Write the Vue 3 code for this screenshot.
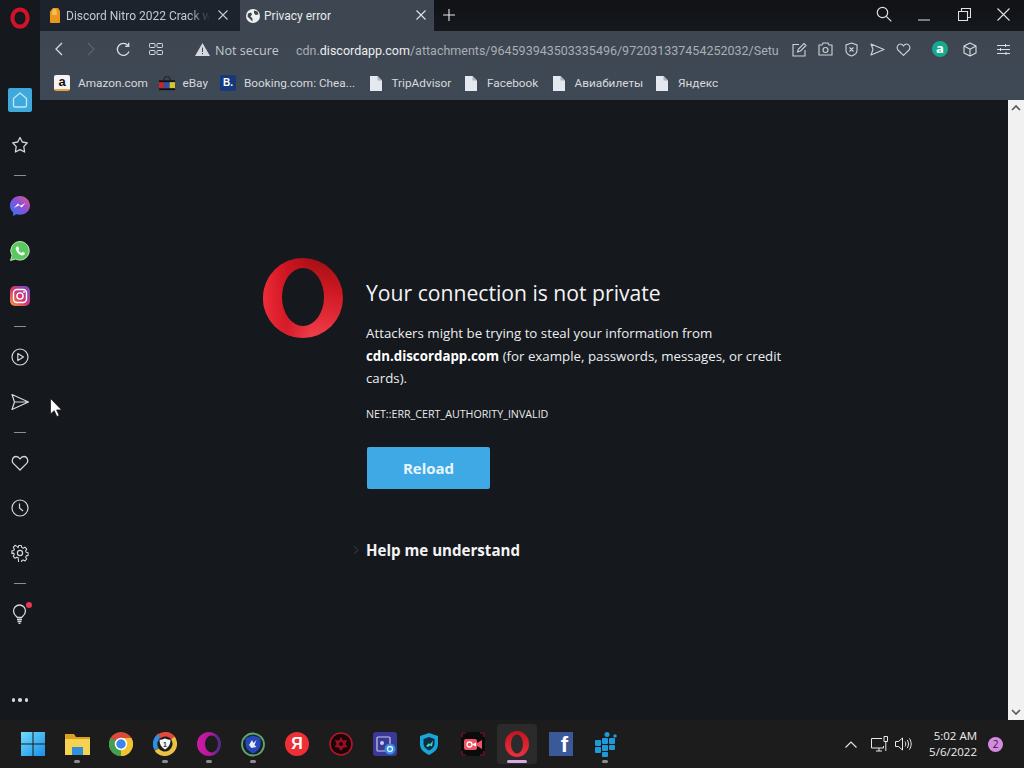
<script setup>
const bookmarks = [
  { label: 'Amazon.com', kind: 'amazon', width: 68 },
  { label: 'eBay', kind: 'ebay', width: 25 },
  { label: 'Booking.com: Chea...', kind: 'booking', width: 111 },
  { label: 'TripAdvisor', kind: 'file', width: 59 },
  { label: 'Facebook', kind: 'file', width: 51 },
  { label: 'Авиабилеты', kind: 'file', width: 67 },
  { label: 'Яндекс', kind: 'file', width: 38 }
]
</script>

<template>
  <div class="screen">
    <div class="browser">
      <aside class="sidebar">
        <div class="side-logo">
          <svg width="20" height="22" viewBox="0 0 20 22"><ellipse cx="10" cy="11" rx="7.6" ry="8.6" fill="none" stroke="#d3122a" stroke-width="4"/></svg>
        </div>
        <div class="slot">
          <div class="home-box">
            <svg width="18" height="18" viewBox="0 0 18 18" fill="none" stroke="#bfe9fb" stroke-width="1.3"><path d="M2.5 7.5 9 2l6.500 5.500v7a1.500 1.500 0 0 1-1.500 1.500H4a1.500 1.500 0 0 1-1.500-1.500z"/></svg>
          </div>
        </div>
        <div class="slot">
          <svg width="18" height="18" viewBox="0 0 18 18" fill="none" stroke="#d5d8dc" stroke-width="1.300" stroke-linejoin="round"><path d="M9 1.500 11.300 6l5 .8-3.500 3.800.8 5.400L9 13.700 4.400 16l.8-5.400L1.700 6.800l5-.8z"/></svg>
        </div>
        <div class="sep"></div>
        <div class="slot">
          <svg width="20" height="20" viewBox="0 0 20 20"><defs><linearGradient id="msg" x1="0" y1="1" x2="1" y2="0"><stop offset="0" stop-color="#2f7cf0"/><stop offset=".55" stop-color="#8b4fd8"/><stop offset="1" stop-color="#ec5a80"/></linearGradient></defs><path d="M10 0C4.400 0 0 4.100 0 9.600c0 2.900 1.200 5.300 3.200 7V20l3-1.700c1.200.3 2.500.5 3.800.5 5.600 0 10-4.100 10-9.200S15.600 0 10 0z" fill="url(#msg)"/><path d="m4 12 3.800-4.500 2.700 2.200L15.500 7l-3.800 4.500L9 9.300z" fill="#fff"/></svg>
        </div>
        <div class="slot">
          <svg width="20" height="20" viewBox="0 0 20 20"><path d="M10 .5a9.300 9.300 0 0 0-8 14L.5 19.500l5.200-1.400A9.300 9.300 0 1 0 10 .5z" fill="#58c95c" stroke="#e6f6e6" stroke-width=".8"/><path d="M6.800 5.400c-.9.800-1.400 1.900-.9 3.300.9 2.500 3 4.700 5.400 5.500 1.400.5 2.600 0 3.300-1l.2-1.300-2.300-1.100-1 1.200c-1.300-.5-2.600-1.800-3.200-3.100l.9-1-1-2.400z" fill="#fff"/></svg>
        </div>
        <div class="slot">
          <svg width="20" height="20" viewBox="0 0 20 20"><defs><linearGradient id="ig" x1="0" y1="1" x2="1" y2="0"><stop offset="0" stop-color="#f2a23c"/><stop offset=".45" stop-color="#d8386f"/><stop offset="1" stop-color="#6a4dd0"/></linearGradient></defs><rect width="20" height="20" rx="5" fill="url(#ig)"/><rect x="3.500" y="3.500" width="13" height="13" rx="3.500" fill="none" stroke="#fff" stroke-width="1.400"/><circle cx="10" cy="10" r="3.100" fill="none" stroke="#fff" stroke-width="1.400"/><circle cx="14" cy="6" r=".9" fill="#fff"/></svg>
        </div>
        <div class="sep"></div>
        <div class="slot">
          <svg width="18" height="18" viewBox="0 0 18 18" fill="none" stroke="#d5d8dc" stroke-width="1.200" stroke-linejoin="round"><circle cx="9" cy="9" r="8"/><path d="M6.800 5.500 12.500 9l-5.700 3.500z"/></svg>
        </div>
        <div class="slot">
          <svg width="18" height="18" viewBox="0 0 18 18" fill="none" stroke="#d5d8dc" stroke-width="1.200" stroke-linejoin="round"><path d="M1 1.500 17.500 9 1 16.500 3.500 9zM3.500 9h14"/></svg>
        </div>
        <div class="sep"></div>
        <div class="slot">
          <svg width="18" height="18" viewBox="0 0 18 18" fill="none" stroke="#d5d8dc" stroke-width="1.300" stroke-linejoin="round"><path d="M9 16 2.300 9.400C.2 7.200 1.600 2.500 5 2.500c1.800 0 3.100 1 4 2.500.9-1.500 2.200-2.500 4-2.500 3.400 0 4.800 4.700 2.700 6.900z"/></svg>
        </div>
        <div class="slot">
          <svg width="18" height="18" viewBox="0 0 18 18" fill="none" stroke="#d5d8dc" stroke-width="1.200"><circle cx="9" cy="9" r="8"/><path d="M8.500 4.500V9l3.500 3"/></svg>
        </div>
        <div class="slot">
          <svg width="18" height="18" viewBox="0 0 18 18" fill="none" stroke="#d5d8dc" stroke-width="1.200" stroke-linejoin="round"><circle cx="9" cy="9" r="2.600"/><path d="M7.500 1h3l.5 2.300 1.500.7 2-1.200 2 2.200-1.200 2 .6 1.500 2.100.5v3l-2.100.5-.6 1.500 1.200 2-2 2.200-2-1.200-1.500.7-.5 2.300h-3L7 14.700l-1.500-.7-2 1.200-2-2.200 1.200-2-.6-1.500L0 10V7l2.100-.5.600-1.500-1.200-2 2-2.200 2 1.200L7 3.300z" transform="translate(.9 .6) scale(.9)"/></svg>
        </div>
        <div class="sep"></div>
        <div class="slot">
          <div class="bulb">
            <svg width="16" height="20" viewBox="0 0 16 20" fill="none" stroke="#d5d8dc" stroke-width="1.300"><path d="M5.500 13.500C4 12 1.500 10.500 1.500 7a6 6 0 0 1 12 0c0 3.500-2.500 5-4 6.500zM5 15.500h5M5.500 17.500h4M6.500 19.300h2"/></svg>
            <span class="bulb-dot"></span>
          </div>
        </div>
        <div class="dots"><span></span><span></span><span></span></div>
      </aside>

      <div class="window">
        <header class="tabbar">
          <div class="tab tab-off">
            <svg width="12" height="15" viewBox="0 0 12 15"><path d="M1 3.500 4 0h5l2 3v11a1 1 0 0 1-1 1H2a1 1 0 0 1-1-1z" fill="#e9961a"/><path d="M4 1h3l1 3v3H3V4z" fill="#f5bb55"/></svg>
            <span class="tab-title fade">Discord Nitro 2022 Crack w</span>
            <svg class="tab-x" width="10" height="10" viewBox="0 0 10 10" stroke="#c6cacf" stroke-width="1.100"><path d="m.5.500 9 9M9.500.500l-9 9"/></svg>
          </div>
          <div class="tab tab-on">
            <svg width="14" height="14" viewBox="0 0 14 14"><circle cx="7" cy="7" r="7" fill="#eef0f2"/><path d="M2 4.500 5 3.500l1 2-1.500 2 2 2v3L4 10 1.500 7.500zM8 1.500l3.500 1 1 3-3 .5-1.500-2z" fill="#3d4752"/></svg>
            <span class="tab-title">Privacy error</span>
            <svg class="tab-x" width="10" height="10" viewBox="0 0 10 10" stroke="#e2e5e8" stroke-width="1.100"><path d="m.5.500 9 9M9.500.500l-9 9"/></svg>
          </div>
          <div class="new-tab">
            <svg width="12" height="12" viewBox="0 0 12 12" stroke="#e8e8e8" stroke-width="1.100"><path d="M6 0v12M0 6h12"/></svg>
          </div>
          <div class="win-controls">
            <svg width="16" height="16" viewBox="0 0 16 16" fill="none" stroke="#dfe1e4" stroke-width="1.200"><circle cx="6.500" cy="6.500" r="5.200"/><path d="m10.300 10.300 5 5"/></svg>
            <svg class="win-min" width="12" height="2" viewBox="0 0 12 2" stroke="#dfe1e4" stroke-width="1"><path d="M0 1h12"/></svg>
            <svg class="win-max" width="13" height="13" viewBox="0 0 13 13" fill="none" stroke="#dfe1e4" stroke-width="1.100"><path d="M.5 3.500h9v9h-9zM3.500 3.500v-3h9v9h-3"/></svg>
            <svg class="win-close" width="13" height="13" viewBox="0 0 13 13" stroke="#dfe1e4" stroke-width="1.100"><path d="m.5.500 12 12M12.500.500l-12 12"/></svg>
          </div>
        </header>

        <div class="toolbar">
          <div class="nav-row">
            <div class="nav-icons">
              <svg width="9" height="14" viewBox="0 0 9 14" fill="none" stroke="#d9dcdf" stroke-width="1.300"><path d="M8 1 2 7l6 6"/></svg>
              <svg width="9" height="14" viewBox="0 0 9 14" fill="none" stroke="#59626c" stroke-width="1.300"><path d="m1 1 6 6-6 6"/></svg>
              <svg width="15" height="15" viewBox="0 0 15 15" fill="none" stroke="#d9dcdf" stroke-width="1.300"><path d="M13 9.500A6 6 0 1 1 12 3.500M12.700.8v3.500H9.200"/></svg>
              <svg width="14" height="12" viewBox="0 0 14 12" fill="none" stroke="#d9dcdf" stroke-width="1"><rect x=".5" y=".5" width="5.500" height="4" rx=".8"/><rect x="8" y=".5" width="5.500" height="4" rx=".8"/><rect x=".5" y="7.500" width="5.500" height="4" rx=".8"/><rect x="8" y="7.500" width="5.500" height="4" rx=".8"/></svg>
            </div>
            <div class="secure">
              <svg width="15" height="13" viewBox="0 0 15 13"><path d="M7.500 0 15 13H0z" fill="#d6d9dd"/><path d="M7 4.500h1v4.500H7zM7 10h1v1.200H7z" fill="#3d4752"/></svg>
              <span>Not secure</span>
            </div>
            <div class="url">cdn.<b>discordapp.com</b>/attachments/964593943503335496/972031337454252032/Setu</div>
            <div class="page-icons">
              <svg width="15" height="15" viewBox="0 0 15 15" fill="none" stroke="#d0d3d7" stroke-width="1.100"><path d="M7 2.500H1v11.500h12V8M5.500 10l1-3L12 1.500l2 2L8.500 9z"/></svg>
              <svg width="15" height="14" viewBox="0 0 15 14" fill="none" stroke="#d0d3d7" stroke-width="1.100"><path d="M1 3h3l1-2h5l1 2h3v10H1z"/><circle cx="7.500" cy="8" r="2.500"/></svg>
              <svg class="shield" width="13" height="15" viewBox="0 0 13 15" fill="none" stroke="#d0d3d7" stroke-width="1.100"><path d="M6.500 1 12 3v5.500c0 2.700-2.500 4.500-5.500 5.500C3.500 13 1 11.200 1 8.500V3zM4.500 5.500l4 4M8.500 5.500l-4 4"/></svg>
              <svg width="15" height="13" viewBox="0 0 15 13" fill="none" stroke="#d0d3d7" stroke-width="1.100" stroke-linejoin="round"><path d="m1 1 13 5.500L1 12l2-5.500z"/></svg>
              <svg width="15" height="13" viewBox="0 0 15 13" fill="none" stroke="#d0d3d7" stroke-width="1.100" stroke-linejoin="round"><path d="M7.500 12.300 2 7C.3 5.300 1.300 1 4.300 1c1.500 0 2.500.8 3.200 2 .7-1.200 1.700-2 3.200-2 3 0 4 4.300 2.300 6z"/></svg>
            </div>
            <div class="ext-icons">
              <div class="ext-a">a</div>
              <svg width="14" height="15" viewBox="0 0 14 15" fill="none" stroke="#d9dcdf" stroke-width="1.100" stroke-linejoin="round"><path d="M7 1 13 4v7l-6 3-6-3V4zM1 4l6 3.300L13 4M7 7.300V14"/></svg>
              <svg width="13" height="11" viewBox="0 0 13 11" fill="none" stroke="#d9dcdf" stroke-width="1"><path d="M0 1.500h13M0 5.500h13M0 9.500h13"/><path d="M8.500 0v3M3.500 4v3M9 8v3"/></svg>
            </div>
          </div>
          <div class="bookmarks">
            <div v-for="b in bookmarks" :key="b.label + b.kind" class="bookmark">
              <div class="bm-icon">
                <div v-if="b.kind === 'amazon'" class="bm-amazon">a</div>
                <svg v-else-if="b.kind === 'ebay'" width="18" height="16" viewBox="0 0 18 16"><path d="M5 5 7 1h4l2 4" fill="none" stroke="#222" stroke-width="1.300"/><rect y="5" width="18" height="3" fill="#111"/><rect x="0" y="7" width="6" height="7" fill="#c3272b"/><rect x="6" y="7" width="6" height="7" fill="#2b4fb5"/><rect x="12" y="7" width="6" height="7" fill="#d7c52a"/><rect y="14" width="18" height="2" fill="#111"/></svg>
                <div v-else-if="b.kind === 'booking'" class="bm-booking">B.</div>
                <svg v-else width="12" height="15" viewBox="0 0 12 15"><path d="M0 0h7.500L12 4.500V15H0z" fill="#e4e9ef"/><path d="M7.500 0v4.500H12z" fill="#a9b2bc"/></svg>
              </div>
              <span :style="{ width: b.width + 'px' }">{{ b.label }}</span>
            </div>
          </div>
        </div>

        <div class="page">
          <main class="content">
            <svg class="logo" width="80" height="80" viewBox="0 0 80 80">
              <defs>
                <linearGradient id="opG" x1="0.700" y1="0" x2="0.500" y2="1">
                  <stop offset="0" stop-color="#a30f14"/>
                  <stop offset=".4" stop-color="#d11a24"/>
                  <stop offset="1" stop-color="#f2404d"/>
                </linearGradient>
                <linearGradient id="opL" x1="0" y1="0" x2="1" y2="0">
                  <stop offset="0" stop-color="#ee2d3a"/>
                  <stop offset=".3" stop-color="#d01421" stop-opacity=".8"/>
                  <stop offset=".6" stop-color="#d01421" stop-opacity="0"/>
                </linearGradient>
              </defs>
              <circle cx="40" cy="40" r="40" fill="url(#opG)"/>
              <circle cx="40" cy="40" r="40" fill="url(#opL)"/>
              <ellipse cx="40" cy="39" rx="21" ry="29" fill="#15181d"/>
            </svg>
            <div class="message">
              <h1>Your connection is not private</h1>
              <p class="desc">Attackers might be trying to steal your information from <b>cdn.discordapp.com</b> (for example, passwords, messages, or credit cards).</p>
              <p class="code">NET::ERR_CERT_AUTHORITY_INVALID</p>
              <button class="reload" type="button">Reload</button>
              <div class="help">
                <svg class="help-arrow" width="6" height="10" viewBox="0 0 6 10" fill="none" stroke="#29313b" stroke-width="1.300"><path d="m1 1 4 4-4 4"/></svg>
                <span>Help me understand</span>
              </div>
            </div>
          </main>
          <div class="scrollbar">
            <svg width="10" height="6" viewBox="0 0 10 6" fill="none" stroke="#555" stroke-width="1.600"><path d="m1 5 4-4 4 4"/></svg>
            <svg width="10" height="6" viewBox="0 0 10 6" fill="none" stroke="#555" stroke-width="1.600"><path d="m1 1 4 4 4-4"/></svg>
          </div>
          <svg class="cursor" width="12" height="19" viewBox="0 0 12 19"><path d="M.5.500v15.500l3.700-3.300 2.600 5.800 2.400-1-2.600-5.600h5z" fill="#fff" stroke="#111" stroke-width=".7"/></svg>
        </div>
      </div>
    </div>

    <footer class="taskbar">
      <div class="task-apps">
        <div class="app">
          <svg width="24" height="24" viewBox="0 0 24 24"><defs><linearGradient id="win" x1="0" y1="0" x2="1" y2="1"><stop offset="0" stop-color="#6fdcf9"/><stop offset="1" stop-color="#1a8fe8"/></linearGradient></defs><path d="M0 0h11.500v11.500H0zM12.500 0H24v11.500H12.500zM0 12.500h11.500V24H0zM12.500 12.500H24V24H12.500z" fill="url(#win)"/></svg>
        </div>
        <div class="app on">
          <svg width="25" height="22" viewBox="0 0 25 22"><path d="M0 1h9l2 3h14v18H0z" fill="#d9a21f"/><path d="M0 6h25v16H0z" fill="#f6d252"/><path d="M7 14h11v8H7z" fill="#2f8fd8"/></svg>
        </div>
        <div class="app">
          <svg width="24" height="24" viewBox="0 0 24 24"><circle cx="12" cy="12" r="12" fill="#d84a3a"/><path d="M12 12 22.400 18A12 12 0 0 1 1.600 18z" fill="#3fa24e"/><path d="M12 12 1.600 18A12 12 0 0 1 1.600 6z" fill="#3fa24e"/><path d="M12 6h10.400A12 12 0 0 1 12 24z" fill="#f2c230"/><circle cx="12" cy="12" r="5.500" fill="#3d85e8" stroke="#fff" stroke-width="1.500"/></svg>
        </div>
        <div class="app on">
          <svg width="24" height="24" viewBox="0 0 24 24" fill="none"><path d="M3.500 17A10 10 0 0 1 7 3.300" stroke="#2f8fe0" stroke-width="4.500"/><path d="M6 4.500A10 10 0 0 1 20.500 6.500" stroke="#e5483c" stroke-width="4.500"/><path d="M20 6a10 10 0 0 1-16.500 11.500" stroke="#edc244" stroke-width="4.500"/><path d="M12 6.500c2 1 4 1.300 5.500 1.300 0 4.500-2 8-5.500 9.700-3.500-1.700-5.500-5.200-5.500-9.700 1.500 0 3.500-.3 5.500-1.300z" fill="#f4f6f8"/><text x="12" y="14.500" class="svg-t" font-size="7" font-weight="700" fill="#333" text-anchor="middle">1</text></svg>
        </div>
        <div class="app on">
          <svg width="24" height="24" viewBox="0 0 24 24"><defs><linearGradient id="ring" x1="0" y1="0" x2="1" y2="0"><stop offset="0" stop-color="#cf1aa2"/><stop offset=".6" stop-color="#b0189a"/><stop offset=".85" stop-color="#5a2c8c"/><stop offset="1" stop-color="#4e2a80"/></linearGradient></defs><circle cx="12" cy="12" r="12" fill="url(#ring)"/><ellipse cx="14.500" cy="12" rx="6.500" ry="8.500" fill="#1c1c1c"/></svg>
        </div>
        <div class="app on">
          <svg width="24" height="25" viewBox="0 0 24 25"><circle cx="12" cy="12.500" r="11" fill="#1b1f2d" stroke="#5fa86a" stroke-width="1.800"/><path d="M12 3.500 19.500 6v6c0 4.500-3.500 7.500-7.500 9.500C8 19.500 4.500 16.500 4.500 12V6z" fill="#2647b8"/><path d="m8 13 3-5 1.500 3 3-3-2 5 2 2-5 1z" fill="#e8ecf4"/></svg>
        </div>
        <div class="app">
          <div class="yandex">Я</div>
        </div>
        <div class="app">
          <svg width="24" height="24" viewBox="0 0 24 24"><circle cx="12" cy="12" r="11" fill="#1a0507" stroke="#b5142a" stroke-width="1.600"/><path d="m12 5 2 3.500 4-.5-1.500 4 2 3-4 .5L12 19l-2.500-3.500-4-.5 2-3L6 8l4 .5z" fill="#9a1022"/><circle cx="12" cy="12" r="2" fill="#1a0507"/></svg>
        </div>
        <div class="app">
          <svg width="24" height="24" viewBox="0 0 24 24"><rect width="24" height="24" rx="3" fill="#3a3a96"/><rect x="4" y="5" width="13" height="14" rx="1" fill="none" stroke="#c8c8ee" stroke-width="1.200"/><circle cx="9" cy="11" r="2" fill="#c8c8ee"/><circle cx="17" cy="17" r="5.500" fill="#2e8fe0"/><circle cx="17" cy="17" r="2.500" fill="none" stroke="#e6f2fc" stroke-width="1.300"/></svg>
        </div>
        <div class="app">
          <svg width="20" height="22" viewBox="0 0 20 22"><path d="M10 0 19 3v8c0 5.500-4 8.500-9 11-5-2.500-9-5.500-9-11V3z" fill="#18a6d8"/><path d="M10 4 15.500 6v5c0 3-2.500 5-5.500 6.500C7 16 4.500 14 4.500 11V6z" fill="#0f2b45"/><path d="m7 13 3-3 1 1.500 3-4-1 6-2-1-2 1.500z" fill="#3fd8b8"/></svg>
        </div>
        <div class="app">
          <svg width="24" height="24" viewBox="0 0 24 24"><rect width="24" height="24" fill="#0b0b0b"/><path d="M1 5V1h4M19 1h4v4M1 19v4h4M19 23h4v-4" fill="none" stroke="#8a1a28" stroke-width="1.200"/><rect x="3" y="7" width="13" height="11" rx="2" fill="#ee5566"/><path d="m16 11 5-3v9l-5-3z" fill="#ee5566"/><circle cx="8.500" cy="12.500" r="2.500" fill="none" stroke="#fff" stroke-width="1.300"/><path d="m11 12.500 4-2v4z" fill="#fff"/></svg>
        </div>
        <div class="app active">
          <svg width="24" height="26" viewBox="0 0 24 26"><defs><linearGradient id="opT" x1=".5" y1="0" x2=".5" y2="1"><stop offset="0" stop-color="#c3141f"/><stop offset="1" stop-color="#ee3040"/></linearGradient></defs><ellipse cx="12" cy="13" rx="12" ry="13" fill="url(#opT)"/><ellipse cx="12" cy="13" rx="6" ry="9.500" fill="#2b2b2b"/></svg>
        </div>
        <div class="app">
          <div class="fb">f</div>
        </div>
        <div class="app on">
          <svg width="24" height="25" viewBox="0 0 24 25"><g fill="#1f9ad8"><rect x="2" y="8" width="6" height="6" rx="1"/><rect x="9" y="6" width="6" height="6" rx="1"/><rect x="16" y="6" width="6" height="6" rx="1"/><rect x="2" y="15" width="6" height="6" rx="1"/><rect x="9" y="13" width="6" height="6" rx="1"/><rect x="16" y="13" width="6" height="5" rx="1"/><rect x="9" y="20" width="6" height="5" rx="1"/><circle cx="14" cy="2.500" r="2.500"/><circle cx="22" cy="4" r="1.800"/></g></svg>
        </div>
      </div>
      <div class="tray">
        <svg width="12" height="7" viewBox="0 0 12 7" fill="none" stroke="#e8e8e8" stroke-width="1.100"><path d="m.5 6.500 5.500-5.500 5.500 5.500"/></svg>
        <svg class="net" width="17" height="16" viewBox="0 0 17 16" fill="none" stroke="#e8e8e8" stroke-width="1"><path d="M11 2.500H.5v9.500h12v-2M5 15h6M8 12v3M13 .5h3.500v5H13zM14.800 5.500V15"/></svg>
        <svg class="vol" width="17" height="14" viewBox="0 0 17 14" fill="none" stroke="#e8e8e8" stroke-width="1"><path d="M.5 4.500h3l4-3.500v12l-4-3.500h-3zM10 4.500c1 1.500 1 3.500 0 5M12.300 3c1.600 2.500 1.600 5.500 0 8M14.500 1.500c2.200 3.500 2.200 7.500 0 11"/></svg>
        <div class="clock"><span>5:02 AM</span><span>5/6/2022</span></div>
        <div class="badge">2</div>
      </div>
    </footer>
  </div>
</template>

<style scoped>
.screen { width: 1024px; height: 768px; display: flex; flex-direction: column; overflow: hidden; background: #15181d; font-family: "Open Sans", "Noto Sans", sans-serif; color: #fff; }
.browser { flex: 1; min-height: 0; display: flex; }
.sidebar { width: 40px; flex: none; background: #15181d; display: flex; flex-direction: column; align-items: center; }
.side-logo { height: 77px; padding-top: 7px; box-sizing: border-box; display: flex; justify-content: center; align-items: flex-start; }
.slot { height: 45px; width: 40px; display: flex; align-items: center; justify-content: center; flex: none; }
.home-box { width: 24px; height: 24px; border-radius: 2px; background: #3fa9dc; display: flex; align-items: center; justify-content: center; }
.sep { height: 16px; width: 12px; flex: none; display: flex; align-items: center; }
.sep::before { content: ""; display: block; width: 12px; height: 1px; background: #8a8e93; }
.bulb { position: relative; width: 16px; height: 20px; }
.bulb-dot { position: absolute; right: -4px; top: -2px; width: 6px; height: 6px; border-radius: 50%; background: #e5394d; }
.dots { margin-top: auto; height: 40px; display: flex; align-items: center; gap: 3px; }
.dots span { width: 3.500px; height: 3.500px; border-radius: 50%; background: #d5d8dc; }
.window { flex: 1; min-width: 0; display: flex; flex-direction: column; }
.tabbar { height: 31px; flex: none; display: flex; background: linear-gradient(#101215, #15181d); }
.tab { display: flex; align-items: center; box-sizing: border-box; height: 31px; position: relative; font-family: Roboto, sans-serif; }
.tab-off { width: 200px; background: #1d232c; padding-left: 9px; gap: 5px; color: #c6cacf; }
.tab-on { width: 194px; background: #3d4651; padding-left: 6px; gap: 4px; color: #e8eaec; }
.tab-title { font-size: 12px; white-space: nowrap; overflow: hidden; }
.fade { width: 144px; -webkit-mask-image: linear-gradient(to right, #000 85%, transparent); mask-image: linear-gradient(to right, #000 85%, transparent); }
.tab-x { position: absolute; right: 12px; top: 10px; }
.tab-on .tab-x { right: 8px; }
.new-tab { width: 30px; display: flex; align-items: center; justify-content: center; padding-bottom: 2px; }
.win-controls { margin-left: auto; display: flex; align-items: center; padding: 0 14px 3px 0; }
.win-min { margin: 11px 0 0 26px; }
.win-max { margin-left: 28px; }
.win-close { margin-left: 26px; }
.toolbar { height: 69px; flex: none; background: linear-gradient(#3d4651, #3f4955); display: flex; flex-direction: column; }
.nav-row { height: 36px; display: flex; align-items: center; }
.nav-icons { display: flex; align-items: center; width: 155px; padding-left: 14px; box-sizing: border-box; }
.nav-icons svg:nth-child(2) { margin-left: 24px; }
.nav-icons svg:nth-child(3) { margin-left: 20px; }
.nav-icons svg:nth-child(4) { margin-left: 18px; }
.secure { display: flex; align-items: center; gap: 5px; width: 101px; font-size: 12.600px; color: #c3c7cc; white-space: nowrap; }
.secure span { padding-top: 3px; }
.url { width: 485px; flex: none; font-family: Roboto, sans-serif; font-size: 12.500px; color: #a9afb6; white-space: nowrap; padding-top: 2px; }
.url b { font-weight: 400; color: #eceef0; }
.page-icons { display: flex; align-items: center; gap: 11px; margin-left: 11px; }
.shield { margin: 0 1px; }
.ext-icons { display: flex; align-items: center; margin-left: 21px; gap: 15px; }
.ext-icons svg:last-child { margin-left: 5px; }
.ext-a { width: 16px; height: 16px; border-radius: 50%; background: #17a98f; color: #fff; font-weight: 700; font-size: 13px; line-height: 14px; text-align: center; }
.bookmarks { height: 33px; display: flex; align-items: center; padding: 0 0 1px 14px; box-sizing: border-box; }
.bookmark { display: flex; align-items: center; font-family: Roboto, sans-serif; font-size: 11.800px; color: #d6d9dd; margin-right: 12.500px; }
.bm-icon { width: 16px; height: 16px; flex: none; margin-right: 8px; display: flex; align-items: center; justify-content: center; }
.bookmark span { white-space: nowrap; flex: none; }
.bm-amazon { width: 16px; height: 16px; background: #f4f4f4; border-radius: 2px; color: #111; font: 700 13px/13px "Liberation Sans", sans-serif; text-align: center; border-bottom: 2px solid #e8a33a; box-sizing: border-box; }
.bm-booking { width: 16px; height: 16px; background: #143a7c; border-radius: 2px; color: #fff; font: 700 10px/16px "Liberation Sans", sans-serif; text-align: center; }
.page { flex: 1; min-height: 0; display: flex; position: relative; }
.content { flex: 1; min-width: 0; box-sizing: border-box; padding: 158px 0 0 223px; display: flex; align-items: flex-start; gap: 23px; background: #15181d; }
.logo { flex: none; }
.message { width: 430px; padding-top: 20px; }
h1 { margin: 0; font-size: 21.150px; font-weight: 400; line-height: 30px; color: #f3f4f5; white-space: nowrap; }
.desc { margin: 14px 0 0; font-size: 13.300px; line-height: 22.600px; color: #eceef0; }
.desc b { font-weight: 700; color: #fff; }
.code { margin: 16px 0 0; font-size: 10.700px; line-height: 16px; color: #e8eaec; }
.reload { display: block; margin: 25px 0 0 1px; width: 123px; height: 42px; border: 0; border-radius: 2px; background: #3fa9e6; color: #e8f5fc; font: 700 15px "Open Sans", sans-serif; }
.help { position: relative; margin-top: 49px; font-size: 15.100px; font-weight: 700; line-height: 24px; color: #f3f4f5; }
.help-arrow { position: absolute; left: -13px; top: 7px; }
.scrollbar { width: 16px; flex: none; background: #f1f1f1; display: flex; flex-direction: column; justify-content: space-between; align-items: center; padding: 5px 0; box-sizing: border-box; }
.cursor { position: absolute; left: 10px; top: 298px; }
.taskbar { height: 48px; flex: none; background: #1c1c1c; display: flex; align-items: center; }
.task-apps { display: flex; padding-left: 11px; }
.app { width: 44px; height: 40px; display: flex; align-items: center; justify-content: center; position: relative; }
.app.on::after { content: ""; position: absolute; bottom: 1px; left: 19px; width: 6px; height: 3px; border-radius: 2px; background: #8d8d8d; }
.app.active::before { content: ""; position: absolute; left: 2px; top: 0; width: 40px; height: 40px; border-radius: 4px; background: #2b2b2b; }
.app.active::after { content: ""; position: absolute; bottom: 1px; left: 12px; width: 20px; height: 3px; border-radius: 2px; background: #d9a9e0; }
.app.active svg { position: relative; }
.svg-t { font-family: "Liberation Sans", sans-serif; }
.yandex { width: 24px; height: 24px; border-radius: 50%; background: #ee2f35; color: #fff; font: 700 16px/24px "Liberation Sans", sans-serif; text-align: center; }
.fb { width: 24px; height: 24px; background: #3b5998; color: #fff; font: 700 22px/26px "Liberation Sans", sans-serif; text-align: right; padding-right: 5px; box-sizing: border-box; }
.tray { margin-left: auto; display: flex; align-items: center; color: #eee; padding-right: 21px; }
.net { margin-left: 14px; }
.vol { margin-left: 7px; }
.clock { margin-left: 17px; display: flex; flex-direction: column; align-items: flex-end; font-size: 11.500px; line-height: 16px; }
.badge { margin-left: 11px; width: 15px; height: 15px; border-radius: 50%; background: #d78be0; color: #2a1a30; font-size: 10px; line-height: 15px; text-align: center; }
</style>

<style>
html, body { margin: 0; background: #15181d; }
</style>
